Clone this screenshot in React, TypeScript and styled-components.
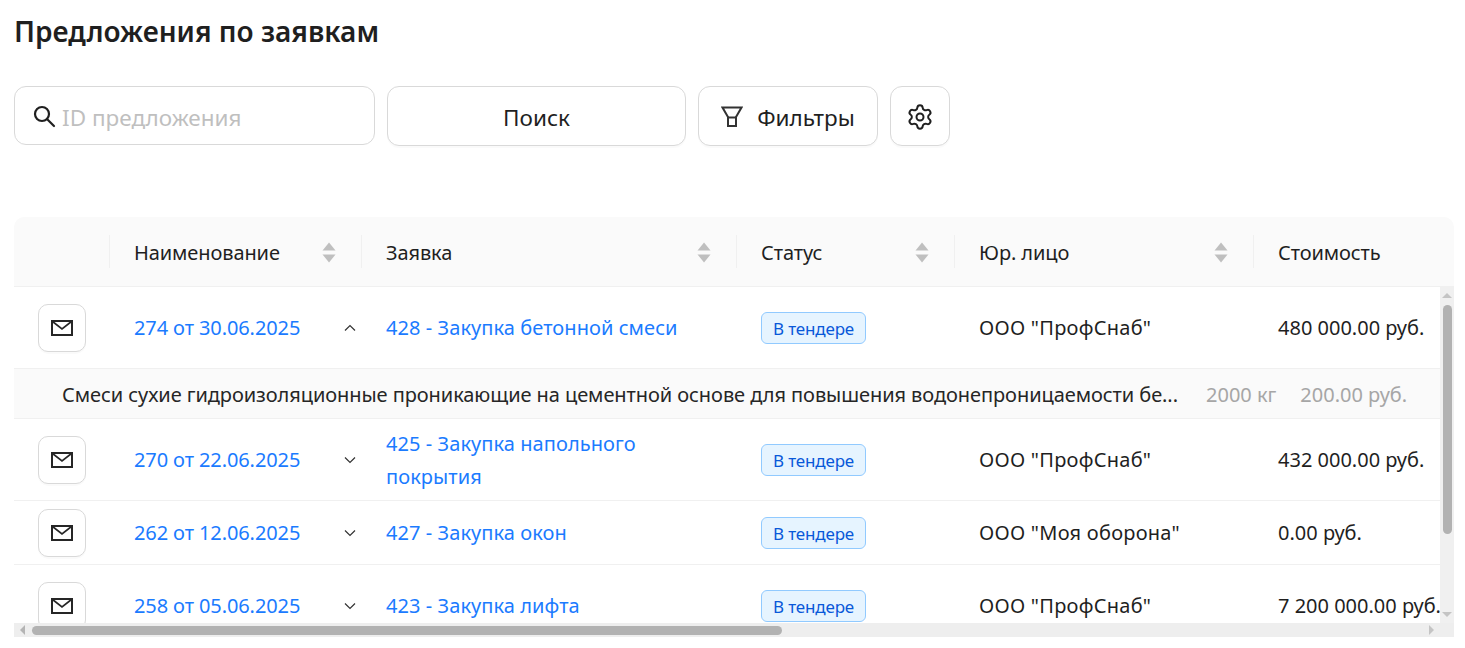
import { Fragment } from "react";
import styled, { createGlobalStyle } from "styled-components";
import { Settings } from "lucide-react";

const GlobalStyle = createGlobalStyle`
  html, body {
    margin: 0;
    height: 100%;
    overflow: hidden;
    background: #fff;
  }
  body {
    font-family: "Noto Sans", "Open Sans", sans-serif;
    color: #1f1f1f;
  }
`;

const Page = styled.div`
  padding: 0 11px 0 14px;
`;

const Title = styled.h1`
  margin: 0;
  height: 86px;
  padding-top: 12px;
  box-sizing: border-box;
  font-size: 28px;
  line-height: 38px;
  font-weight: 600;
`;

const Toolbar = styled.div`
  display: flex;
  gap: 12px;
  height: 131px;
  align-items: flex-start;
`;

const SearchBox = styled.label`
  width: 361px;
  height: 59px;
  box-sizing: border-box;
  display: flex;
  align-items: center;
  gap: 6px;
  padding: 0 17px;
  background: #fff;
  border: 1px solid #d9d9d9;
  border-radius: 12px;
`;

const SearchInput = styled.input`
  flex: 1;
  min-width: 0;
  border: 0;
  outline: 0;
  padding: 3px 0 0;
  font: inherit;
  font-size: 22.5px;
  color: #1f1f1f;
  &::placeholder {
    color: #bfbfbf;
  }
`;

const ToolButton = styled.button<{ $width: number }>`
  width: ${(p) => p.$width}px;
  height: 60px;
  box-sizing: border-box;
  display: flex;
  align-items: center;
  justify-content: center;
  gap: 14px;
  padding: 0;
  font: inherit;
  font-size: 22.5px;
  color: #1f1f1f;
  background: #fff;
  border: 1px solid #d9d9d9;
  border-radius: 12px;
  box-shadow: 0 2px 0 rgba(0, 0, 0, 0.02);
`;

const ButtonLabel = styled.span`
  padding-top: 3px;
`;

const GearIcon = styled(Settings)`
  margin-top: 2px;
`;

const TableShell = styled.div`
  width: 1440px;
  height: 420px;
  display: flex;
  flex-direction: column;
`;

const HeadWrap = styled.div`
  height: 70px;
  flex: none;
  overflow: hidden;
  background: #fafafa;
  border-radius: 10px 10px 0 0;
  border-bottom: 1px solid #f0f0f0;
  box-sizing: border-box;
`;

const BodyArea = styled.div`
  height: 336px;
  flex: none;
  display: flex;
`;

const BodyViewport = styled.div`
  flex: 1;
  min-width: 0;
  overflow: hidden;
`;

const VerticalBar = styled.div`
  width: 14px;
  flex: none;
  box-sizing: border-box;
  display: flex;
  flex-direction: column;
  align-items: center;
  padding: 6px 0;
  background: #f0f0f0;
`;

const VerticalThumb = styled.div<{ $height: number }>`
  width: 9px;
  height: ${(p) => p.$height}px;
  margin: 7px 0 auto;
  background: #b2b2b2;
  border-radius: 5px;
`;

const HorizontalBar = styled.div`
  height: 14px;
  flex: none;
  box-sizing: border-box;
  display: flex;
  align-items: center;
  padding: 0 20px 0 6px;
  background: #eeeeee;
`;

const HorizontalThumb = styled.div<{ $width: number }>`
  width: ${(p) => p.$width}px;
  height: 9px;
  margin: 1px auto 0 7px;
  background: #b2b2b2;
  border-radius: 5px;
`;

const ArrowUp = styled.span`
  width: 0;
  height: 0;
  border: 5px solid transparent;
  border-top: 0;
  border-bottom-color: #c4c4c4;
`;

const ArrowDown = styled.span`
  width: 0;
  height: 0;
  border: 5px solid transparent;
  border-bottom: 0;
  border-top-color: #c4c4c4;
`;

const ArrowLeft = styled.span`
  width: 0;
  height: 0;
  border: 5px solid transparent;
  border-left: 0;
  border-right-color: #b4b4b4;
`;

const ArrowRight = styled.span`
  width: 0;
  height: 0;
  border: 5px solid transparent;
  border-right: 0;
  border-left-color: #c4c4c4;
`;

const Table = styled.table`
  width: 2668px;
  table-layout: fixed;
  border-collapse: separate;
  border-spacing: 0;
  font-size: 20px;
`;

const HeadCell = styled.th<{ $divider?: boolean }>`
  position: relative;
  height: 69px;
  padding: 2px 0 0 24px;
  box-sizing: border-box;
  font-weight: 400;
  text-align: left;
  letter-spacing: -0.1px;
  color: #1f1f1f;
  &::before {
    content: ${(p) => (p.$divider ? '""' : "none")};
    position: absolute;
    left: -1px;
    top: 18px;
    height: 33px;
    width: 1px;
    background: #f0f0f0;
  }
`;

const HeadInner = styled.div`
  display: flex;
  align-items: center;
  justify-content: space-between;
  padding-right: 26px;
`;

const BodyCell = styled.td<{ $height: number }>`
  height: ${(p) => p.$height}px;
  padding: 0 0 0 24px;
  box-sizing: border-box;
  line-height: 33px;
  border-bottom: 1px solid #f0f0f0;
  vertical-align: middle;
`;

const OrderCell = styled(BodyCell)`
  padding-right: 24px;
  letter-spacing: 0.07px;
`;

const CompanyCell = styled(BodyCell)`
  letter-spacing: 0.25px;
`;

const CostCell = styled(BodyCell)`
  white-space: nowrap;
`;

const MailButton = styled.button`
  width: 48px;
  height: 48px;
  display: flex;
  align-items: center;
  justify-content: center;
  padding: 0;
  background: #fff;
  border: 1px solid #d9d9d9;
  border-radius: 10px;
  box-shadow: 0 2px 0 rgba(0, 0, 0, 0.02);
`;

const NameRow = styled.div`
  display: flex;
  align-items: center;
  justify-content: space-between;
  padding-right: 6px;
  letter-spacing: -0.1px;
`;

const LinkText = styled.a`
  color: #1b7bff;
  text-decoration: none;
`;

const StatusTag = styled.span`
  display: inline-block;
  height: 32px;
  box-sizing: border-box;
  padding: 0 11px;
  font-size: 17px;
  letter-spacing: -0.15px;
  line-height: 32px;
  color: #0958d9;
  background: #e6f4ff;
  border: 1px solid #91caff;
  border-radius: 6px;
`;

const DetailCell = styled.td`
  height: 50px;
  padding: 0;
  box-sizing: border-box;
  background: #fafafa;
  border-bottom: 1px solid #f0f0f0;
`;

const DetailRow = styled.div`
  width: 1425px;
  box-sizing: border-box;
  display: flex;
  align-items: center;
  padding: 2px 34px 0 48px;
`;

const DetailName = styled.span`
  width: 1116px;
  flex: none;
  white-space: nowrap;
  letter-spacing: -0.07px;
  color: #262626;
`;

const DetailMeta = styled.span<{ $left: number }>`
  margin-left: ${(p) => p.$left}px;
  white-space: nowrap;
  color: #a6a6a6;
`;

function SearchIcon() {
  return (
    <svg width="24" height="24" viewBox="0 0 24 24" fill="none" stroke="#1f1f1f" strokeWidth="2.2">
      <circle cx="10" cy="10" r="7" />
      <path d="M15 15l7 7" strokeLinecap="round" />
    </svg>
  );
}

function FilterIcon() {
  return (
    <svg width="22" height="23" viewBox="0 0 22 23" fill="none" stroke="#333" strokeWidth="2">
      <path d="M1.5 2.5h19L15 12v9H7v-9z" />
      <path d="M7 12.5h8" />
    </svg>
  );
}

function MailIcon() {
  return (
    <svg width="22" height="16" viewBox="0 0 22 16" fill="none" stroke="#262626">
      <rect x="1" y="1" width="20" height="14" strokeWidth="2" />
      <path d="M1.5 1.5L11 9l9.5-7.5" strokeWidth="1.6" />
    </svg>
  );
}

function SortIcon() {
  return (
    <svg width="14" height="21" viewBox="0 0 14 21" fill="#bfbfbf">
      <path d="M7 0.5L13.5 8.5H0.5z" />
      <path d="M0.5 12.5H13.5L7 20.5z" />
    </svg>
  );
}

function Chevron({ open }: { open: boolean }) {
  return (
    <svg width="12" height="8" viewBox="0 0 12 8" fill="none" stroke="#333" strokeWidth="1.2">
      <path d={open ? "M1 6.5L6 1.5l5 5" : "M1 1.5l5 5 5-5"} />
    </svg>
  );
}

const columns = [96, 252, 375, 218, 299, 1428];

const headers = [
  { title: "", sort: false },
  { title: "Наименование", sort: true },
  { title: "Заявка", sort: true },
  { title: "Статус", sort: true },
  { title: "Юр. лицо", sort: true },
  { title: "Стоимость", sort: false },
];

const rows = [
  {
    name: "274 от 30.06.2025",
    order: "428 - Закупка бетонной смеси",
    company: 'ООО "ПрофСнаб"',
    cost: "480 000.00 руб.",
    height: 82,
    open: true,
  },
  {
    name: "270 от 22.06.2025",
    order: "425 - Закупка напольного покрытия",
    company: 'ООО "ПрофСнаб"',
    cost: "432 000.00 руб.",
    height: 82,
    open: false,
  },
  {
    name: "262 от 12.06.2025",
    order: "427 - Закупка окон",
    company: 'ООО "Моя оборона"',
    cost: "0.00 руб.",
    height: 64,
    open: false,
  },
  {
    name: "258 от 05.06.2025",
    order: "423 - Закупка лифта",
    company: 'ООО "ПрофСнаб"',
    cost: "7 200 000.00 руб.",
    height: 82,
    open: false,
  },
];

function ColGroup() {
  return (
    <colgroup>
      {columns.map((w, i) => (
        <col key={i} width={w} />
      ))}
    </colgroup>
  );
}

export default function App() {
  return (
    <Page>
      <GlobalStyle />
      <Title>Предложения по заявкам</Title>
      <Toolbar>
        <SearchBox>
          <SearchIcon />
          <SearchInput placeholder="ID предложения" />
        </SearchBox>
        <ToolButton $width={299}>
          <ButtonLabel>Поиск</ButtonLabel>
        </ToolButton>
        <ToolButton $width={180}>
          <FilterIcon />
          <ButtonLabel>Фильтры</ButtonLabel>
        </ToolButton>
        <ToolButton $width={60}>
          <GearIcon size={28} strokeWidth={1.7} />
        </ToolButton>
      </Toolbar>
      <TableShell>
        <HeadWrap>
          <Table>
            <ColGroup />
            <thead>
              <tr>
                {headers.map((h, i) => (
                  <HeadCell key={i} $divider={i > 0}>
                    <HeadInner>
                      {h.title}
                      {h.sort && <SortIcon />}
                    </HeadInner>
                  </HeadCell>
                ))}
              </tr>
            </thead>
          </Table>
        </HeadWrap>
        <BodyArea>
          <BodyViewport>
            <Table>
              <ColGroup />
              <tbody>
                {rows.map((row) => (
                  <Fragment key={row.name}>
                    <tr>
                      <BodyCell $height={row.height}>
                        <MailButton>
                          <MailIcon />
                        </MailButton>
                      </BodyCell>
                      <BodyCell $height={row.height}>
                        <NameRow>
                          <LinkText>{row.name}</LinkText>
                          <Chevron open={row.open} />
                        </NameRow>
                      </BodyCell>
                      <OrderCell $height={row.height}>
                        <LinkText>{row.order}</LinkText>
                      </OrderCell>
                      <BodyCell $height={row.height}>
                        <StatusTag>В тендере</StatusTag>
                      </BodyCell>
                      <CompanyCell $height={row.height}>{row.company}</CompanyCell>
                      <CostCell $height={row.height}>{row.cost}</CostCell>
                    </tr>
                    {row.open && (
                      <tr>
                        <DetailCell colSpan={6}>
                          <DetailRow>
                            <DetailName>
                              Смеси сухие гидроизоляционные проникающие на цементной основе для повышения
                              водонепроницаемости бе...
                            </DetailName>
                            <DetailMeta $left={28}>2000 кг</DetailMeta>
                            <DetailMeta $left={24}>200.00 руб.</DetailMeta>
                          </DetailRow>
                        </DetailCell>
                      </tr>
                    )}
                  </Fragment>
                ))}
              </tbody>
            </Table>
          </BodyViewport>
          <VerticalBar>
            <ArrowUp />
            <VerticalThumb $height={229} />
            <ArrowDown />
          </VerticalBar>
        </BodyArea>
        <HorizontalBar>
          <ArrowLeft />
          <HorizontalThumb $width={750} />
          <ArrowRight />
        </HorizontalBar>
      </TableShell>
    </Page>
  );
}
